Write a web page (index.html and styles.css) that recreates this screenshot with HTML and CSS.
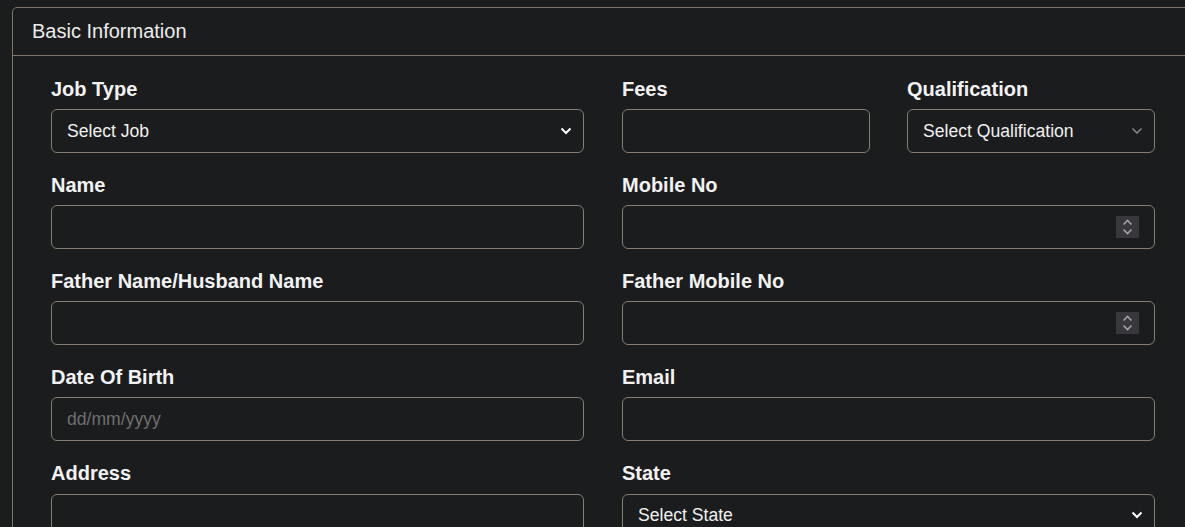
FILE: index.html
```html
<!DOCTYPE html>
<html lang="en">
<head>
<meta charset="utf-8">
<title>Basic Information</title>
<link rel="stylesheet" href="styles.css">
</head>
<body>
<div class="page">
  <section class="card">
    <header class="card-header">Basic Information</header>
    <div class="card-body">
      <div class="grid">
        <div class="field">
          <label class="label">Job Type</label>
          <div class="control select">
            <span class="value">Select Job</span>
            <svg class="chev" width="12" height="8" viewBox="0 0 12 8"><path d="M1.5 1.5 L6 6 L10.5 1.5" fill="none" stroke="#ffffff" stroke-width="2"/></svg>
          </div>
        </div>
        <div class="split">
          <div class="field">
            <label class="label">Fees</label>
            <div class="control"></div>
          </div>
          <div class="field">
            <label class="label">Qualification</label>
            <div class="control select">
              <span class="value">Select Qualification</span>
              <svg class="chev" width="12" height="8" viewBox="0 0 12 8"><path d="M1.5 1.5 L6 6 L10.5 1.5" fill="none" stroke="#8d8d8d" stroke-width="1.4"/></svg>
            </div>
          </div>
        </div>

        <div class="field">
          <label class="label">Name</label>
          <div class="control"></div>
        </div>
        <div class="field">
          <label class="label">Mobile No</label>
          <div class="control number">
            <span class="spin"><svg width="23" height="22" viewBox="0 0 23 22"><path d="M7.5 8.5 L11.5 4.5 L15.5 8.5" fill="none" stroke="#a3a3a7" stroke-width="1.6"/><path d="M7.5 13.5 L11.5 17.5 L15.5 13.5" fill="none" stroke="#a3a3a7" stroke-width="1.6"/></svg></span>
          </div>
        </div>

        <div class="field">
          <label class="label">Father Name/Husband Name</label>
          <div class="control"></div>
        </div>
        <div class="field">
          <label class="label">Father Mobile No</label>
          <div class="control number">
            <span class="spin"><svg width="23" height="22" viewBox="0 0 23 22"><path d="M7.5 8.5 L11.5 4.5 L15.5 8.5" fill="none" stroke="#a3a3a7" stroke-width="1.6"/><path d="M7.5 13.5 L11.5 17.5 L15.5 13.5" fill="none" stroke="#a3a3a7" stroke-width="1.6"/></svg></span>
          </div>
        </div>

        <div class="field">
          <label class="label">Date Of Birth</label>
          <div class="control"><span class="placeholder">dd/mm/yyyy</span></div>
        </div>
        <div class="field">
          <label class="label">Email</label>
          <div class="control"></div>
        </div>

        <div class="field">
          <label class="label">Address</label>
          <div class="control"></div>
        </div>
        <div class="field">
          <label class="label">State</label>
          <div class="control select">
            <span class="value">Select State</span>
            <svg class="chev" width="12" height="8" viewBox="0 0 12 8"><path d="M1.5 1.5 L6 6 L10.5 1.5" fill="none" stroke="#ffffff" stroke-width="2"/></svg>
          </div>
        </div>
      </div>
    </div>
  </section>
</div>
</body>
</html>
```

FILE: styles.css
```css
html, body {
  margin: 0;
  padding: 0;
  background: #1b1c1e;
  overflow: hidden;
}
body {
  font-family: "Liberation Sans", Arial, sans-serif;
  color: #f0f0f0;
}
.page {
  padding: 7px 0 0 12px;
  width: 1300px;
}
.card {
  width: 1179px;
  border: 1px solid #7d756c;
  border-radius: 5px;
  background: #1b1c1e;
}
.card-header {
  height: 47px;
  line-height: 47px;
  padding: 0 19px;
  font-size: 20px;
  color: #ececec;
  border-bottom: 1px solid #7d756c;
}
.card-body {
  padding: 21.5px 37px 40px 38px;
}
.grid {
  display: grid;
  grid-template-columns: 533px 533px;
  column-gap: 38px;
  row-gap: 20.875px;
}
.split {
  display: grid;
  grid-template-columns: 248px 248px;
  column-gap: 37px;
}
.field {
  display: flex;
  flex-direction: column;
}
.label {
  font-size: 20px;
  font-weight: bold;
  line-height: 23.5px;
  margin-bottom: 8px;
  color: #f2f2f2;
}
.control {
  position: relative;
  box-sizing: border-box;
  height: 43.75px;
  border: 1px solid #857c72;
  border-radius: 6px;
  background: #1b1c1e;
  display: flex;
  align-items: center;
  padding: 1px 15px 0;
  font-size: 17.6px;
  color: #f0f0f0;
}
.select .value {
  flex: 1;
}
.chev {
  position: absolute;
  right: 11px;
  top: 50%;
  margin-top: -4px;
}
.placeholder {
  color: #6f6f70;
}
.spin {
  position: absolute;
  right: 15px;
  top: 9.5px;
  width: 23px;
  height: 22px;
  background: #38383c;
  display: block;
}
.spin svg {
  display: block;
}
```
